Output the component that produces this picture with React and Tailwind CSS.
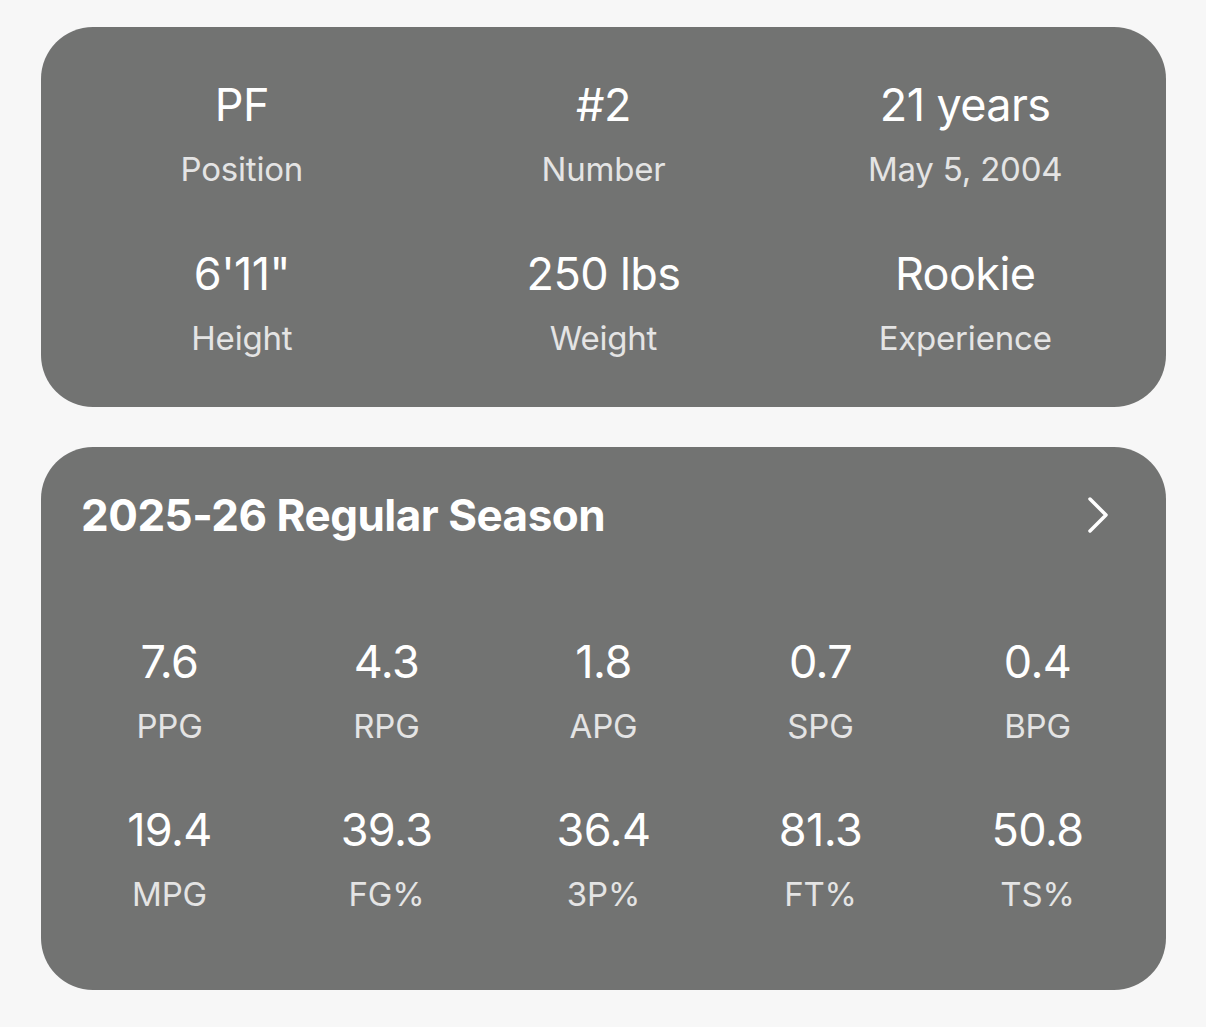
import React from 'react';

const bio = [
  [
    { value: 'PF', label: 'Position' },
    { value: '#2', label: 'Number' },
    { value: '21 years', label: 'May 5, 2004' },
  ],
  [
    { value: '6\'11"', label: 'Height' },
    { value: '250 lbs', label: 'Weight' },
    { value: 'Rookie', label: 'Experience' },
  ],
];

const stats = [
  [
    { value: '7.6', label: 'PPG' },
    { value: '4.3', label: 'RPG' },
    { value: '1.8', label: 'APG' },
    { value: '0.7', label: 'SPG' },
    { value: '0.4', label: 'BPG' },
  ],
  [
    { value: '19.4', label: 'MPG' },
    { value: '39.3', label: 'FG%' },
    { value: '36.4', label: '3P%' },
    { value: '81.3', label: 'FT%' },
    { value: '50.8', label: 'TS%' },
  ],
];

function Stat({ value, label }) {
  return (
    <div className="flex flex-col items-center">
      <div className="text-[45px] leading-[56px] font-normal text-white tracking-[-0.6px]">{value}</div>
      <div className="mt-[14px] text-[33px] leading-[44px] text-[#e4e4e4] tracking-[-0.2px]">{label}</div>
    </div>
  );
}

export default function App() {
  return (
    <div
      className="min-h-[1027px] bg-[#f7f7f7] pl-[41px] pr-[40px] pt-[27px]"
      style={{ fontFamily: 'Inter, "Noto Sans", sans-serif' }}
    >
      {/* Bio card */}
      <div className="rounded-[52px] bg-[#727372] px-5 pt-[50px] pb-[47px]">
        <div className="flex flex-col gap-[55px]">
          {bio.map((row, i) => (
            <div key={i} className="grid grid-cols-3">
              {row.map((item) => (
                <Stat key={item.label} {...item} />
              ))}
            </div>
          ))}
        </div>
      </div>

      {/* Season card */}
      <div className="mt-10 rounded-[52px] bg-[#727372] px-5 pt-[42px] pb-[74px]">
        <div className="flex items-center justify-between pl-5 pr-[36px]">
          <h2 className="text-[44px] leading-[52px] font-bold text-white tracking-[-0.5px]">
            2025-26 Regular Season
          </h2>
          <svg width="24" height="38" viewBox="0 0 24 38" fill="none">
            <path d="M4 3 L20 19 L4 35" stroke="white" strokeWidth="3.5" strokeLinecap="round" strokeLinejoin="round" />
          </svg>
        </div>
        <div className="mt-[93px] flex flex-col gap-[54px]">
          {stats.map((row, i) => (
            <div key={i} className="grid grid-cols-5">
              {row.map((item) => (
                <Stat key={item.label} {...item} />
              ))}
            </div>
          ))}
        </div>
      </div>
    </div>
  );
}
